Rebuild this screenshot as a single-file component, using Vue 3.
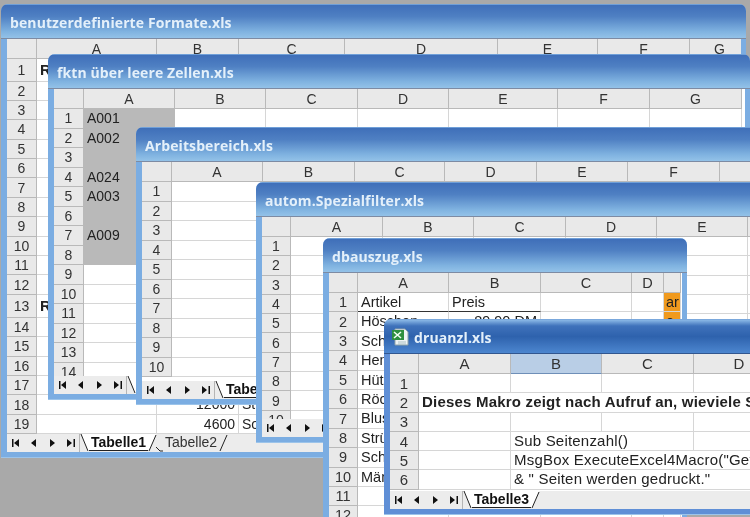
<script setup>
const uni = (n, h = 19.4) => Array(n).fill(h)

const windows = [
  {
    title: 'benutzerdefinierte Formate.xls', x: 1, y: 4, w: 745, h: 454,
    cols: [30, 120, 82, 106, 153, 100, 92, 60], labels: 'ABCDEFG',
    rows: [22.5, ...uni(11), 23, ...uni(6)],
    cells: { '1,1': { t: 'Rechnung', bold: true, big: true }, '13,1': { t: 'Rechnung', bold: true, big: true }, '18,2': { t: '12000', right: true }, '18,3': { t: 'Stück' }, '19,2': { t: '4600', right: true }, '19,3': { t: 'Sonst' } },
    tabs: [{ n: 'Tabelle1', on: true }, { n: 'Tabelle2' }]
  },
  {
    title: 'fktn über leere Zellen.xls', x: 48, y: 54, w: 702, h: 346,
    cols: [30, 91, 91, 92, 91, 109, 92, 92], labels: 'ABCDEFG',
    rows: uni(14, 19.5),
    cells: { '1,1': { t: 'A001', sel: true }, '2,1': { t: 'A002', sel: true }, '3,1': { t: '', sel: true }, '4,1': { t: 'A024', sel: true }, '5,1': { t: 'A003', sel: true }, '6,1': { t: '', sel: true }, '7,1': { t: 'A009', sel: true }, '8,1': { t: '', sel: true } },
    tabs: [{ n: 'Tabelle1', on: true }]
  },
  {
    title: 'Arbeitsbereich.xls', x: 136, y: 127, w: 700, h: 278,
    cols: [30, 91, 92, 90, 92, 91, 92, 91], labels: 'ABCDEFG',
    rows: uni(10, 19.5), cells: {},
    tabs: [{ n: 'Tabelle1', on: true }]
  },
  {
    title: 'autom.Spezialfilter.xls', x: 256, y: 182, w: 600, h: 261,
    cols: [29, 92, 91, 92, 91, 91, 91], labels: 'ABCDEF',
    rows: uni(10, 19.3), cells: {},
    tabs: [{ n: 'Tabelle1', on: true }]
  },
  {
    title: 'dbauszug.xls', x: 323, y: 238, w: 364, h: 360, wide: true,
    cols: [29, 91, 92, 91, 32, 17], labels: 'ABCD ',
    rows: uni(12),
    cells: {
      '1,1': { t: 'Artikel', under: true }, '1,2': { t: 'Preis', under: true }, '1,5': { t: 'ar', orange: true },
      '2,1': { t: 'Höschen' }, '2,2': { t: '89,90 DM', right: true }, '2,5': { t: 'e', orange: true },
      '3,1': { t: 'Schuhe' }, '4,1': { t: 'Hemden' }, '5,1': { t: 'Hüte' }, '6,1': { t: 'Röcke' },
      '7,1': { t: 'Blusen' }, '8,1': { t: 'Strümpfe' }, '9,1': { t: 'Schals' }, '10,1': { t: 'Mäntel' }
    },
    tabs: []
  },
  {
    title: 'druanzl.xls', x: 384, y: 319, w: 500, h: 196, active: true, wide: true,
    cols: [29, 92, 91, 92, 91, 91], labels: 'ABCDE', hot: 'B',
    rows: uni(6, 19.3),
    cells: {
      '2,1': { t: 'Dieses Makro zeigt nach Aufruf an, wieviele Seiten', bold: true, span: 5 },
      '4,2': { t: 'Sub Seitenzahl()', span: 2 },
      '5,2': { t: 'MsgBox ExecuteExcel4Macro("Get.Document(50)")', span: 4 },
      '6,2': { t: '& " Seiten werden gedruckt."', span: 4 }
    },
    tabs: [{ n: 'Tabelle3', on: true }]
  }
]

function rowCells(win, r) {
  const out = []
  for (let c = 1; c < win.cols.length; c++) {
    const cell = win.cells[`${r},${c}`] || { t: '' }
    out.push({ ...cell, c, span: cell.span || 1 })
    c += (cell.span || 1) - 1
  }
  return out
}

const placeWin = (w) => ({ left: w.x + 'px', top: w.y + 'px', width: w.w + 'px', height: w.h + 'px' })
const gridOf = (w) => ({
  gridTemplateColumns: w.cols.map((n) => n + 'px').join(' '),
  gridTemplateRows: ['20px', ...w.rows.map((n) => n + 'px')].join(' ')
})
</script>

<template>
  <div class="desk">
    <section v-for="win in windows" :key="win.title" class="win" :class="{ active: win.active, wide: win.wide }" :style="placeWin(win)">
      <header class="title">
        <svg v-if="win.active" class="xl" width="18" height="18" viewBox="0 0 18 18">
          <path d="M4 1h10l3 3v13H4z" fill="#eef3f4" stroke="#8fa3a8" />
          <rect x="1" y="2" width="12" height="10" fill="#2f8f3f" />
          <path d="M3 4l7 6M10 4l-7 6" stroke="#f4fff4" stroke-width="1.6" />
          <path d="M7 14h8M7 16h8" stroke="#a9c0c4" />
        </svg>
        <span>{{ win.title }}</span>
      </header>
      <div class="body">
        <div class="sheet">
          <div class="grid" :style="gridOf(win)">
            <div class="head corner"></div>
            <div v-for="l in win.labels.split('')" :key="l" class="head" :class="{ hot: win.hot === l }">{{ l === ' ' ? '' : l }}</div>
            <template v-for="(h, i) in win.rows" :key="i">
              <div class="head num">{{ i + 1 }}</div>
              <div
                v-for="cell in rowCells(win, i + 1)"
                :key="cell.c"
                class="cell"
                :class="{ bold: cell.bold, big: cell.big, right: cell.right, sel: cell.sel, under: cell.under, orange: cell.orange }"
                :style="cell.span > 1 ? { gridColumn: 'span ' + cell.span } : null"
              >{{ cell.t }}</div>
            </template>
          </div>
        </div>
        <div v-if="win.tabs.length" class="tabbar">
          <svg class="nav" width="73" height="18" viewBox="0 0 73 18">
            <path d="M5 5h1.5v8H5zM12 5v8l-5-4zM29 5v8l-5-4zM43 5v8l5-4zM60 5v8l5-4zM66.5 5H68v8h-1.5z" fill="#111" />
            <path d="M72.5 0v18" stroke="#b5b5b5" />
          </svg>
          <div v-for="tab in win.tabs" :key="tab.n" class="tab" :class="{ on: tab.on }">
            <svg width="9" height="18" viewBox="0 0 9 18">
              <path v-if="tab.on" d="M1 0L8 17H9V0z" fill="#fff" />
              <path :d="tab.on ? 'M1 0L8 17' : 'M2 13L6 17H9'" stroke="#222" fill="none" />
            </svg>
            <span>{{ tab.n }}</span>
            <svg width="9" height="18" viewBox="0 0 9 18">
              <path v-if="tab.on" d="M0 0V17H1L8 0z" fill="#fff" />
              <path d="M1 17L8 1" stroke="#222" fill="none" />
            </svg>
          </div>
        </div>
      </div>
    </section>
  </div>
</template>

<style scoped>
.desk {
  position: relative;
  width: 750px;
  height: 517px;
  overflow: hidden;
  background: #a9a9a9;
  font-family: "Liberation Sans", Arial, sans-serif;
  color: #222;
  filter: blur(0.35px);
}
.win {
  position: absolute;
  display: flex;
  flex-direction: column;
  box-sizing: border-box;
  background: #7badE2;
  border-radius: 7px 7px 0 0;
  overflow: hidden;
  box-shadow: inset 0 -1px 0 #9cc4ea;
}
.title {
  flex: 0 0 35px;
  box-sizing: border-box;
  display: flex;
  align-items: center;
  gap: 5px;
  padding: 1px 0 0 9px;
  background: linear-gradient(#3f6fb9 0, #4f80c3 35%, #7fb2e0 80%, #93c2e8 100%);
  border-top: 1px solid #6f9fd8;
  border-bottom: 1px solid #7d8ba3;
  color: #e4f0fa;
  font-family: "Open Sans", sans-serif;
  font-weight: 700;
  font-size: 14px;
  letter-spacing: 0.1px;
  white-space: nowrap;
}
.active .title {
  background: linear-gradient(#8ab8e6 0, #3f72bb 18%, #2e62ad 50%, #4c86cf 100%);
  padding-left: 7px;
  border-top-color: #7aa8dc;
  border-bottom-color: #31568f;
}
.active {
  background: #5f8fd6;
}
.body {
  flex: 1;
  min-height: 0;
  display: flex;
  flex-direction: column;
  padding: 0 5px 6px 6px;
}
.sheet {
  flex: 1;
  min-height: 0;
  overflow: hidden;
  background: #fff;
}
.grid {
  display: grid;
  font-size: 14px;
}
.wide .grid {
  font-size: 14.5px;
}
.active .grid {
  font-size: 15px;
}
.active .cell {
  letter-spacing: 0.2px;
}
.head {
  box-sizing: border-box;
  display: flex;
  align-items: center;
  justify-content: center;
  background: #e9e9e9;
  border-right: 1px solid #b9b9b9;
  border-bottom: 1px solid #b9b9b9;
  color: #333;
}
.head.hot {
  background: #b9cee6;
  border-bottom-color: #6f8fb8;
}
.cell {
  box-sizing: border-box;
  min-width: 0;
  padding: 0 3px;
  line-height: 18px;
  white-space: nowrap;
  background: #fff;
  border-right: 1px solid #d6d6d6;
  border-bottom: 1px solid #d6d6d6;
}
.cell.bold {
  font-weight: 700;
}
.cell.big {
  font-size: 15px;
  line-height: 21px;
}
.cell.right {
  text-align: right;
}
.cell.sel {
  background: #b9b9b9;
  border-color: #b9b9b9;
}
.cell.under {
  border-bottom: 1px solid #333;
}
.cell.orange {
  background: #f09a1e;
  padding: 0 2px;
}
.tabbar {
  flex: 0 0 18px;
  display: flex;
  background: #ececec;
  overflow: hidden;
}
.nav {
  flex: none;
}
.tab {
  display: flex;
  flex: none;
  height: 18px;
  font-size: 14px;
  line-height: 17px;
  color: #333;
}
.tab + .tab {
  margin-left: -3px;
}
.tab span {
  padding: 0 2px;
}
.tab.on span {
  background: #fff;
  height: 17px;
  font-weight: 700;
  color: #111;
  border-bottom: 1px solid #222;
  box-sizing: border-box;
}
.tab svg {
  display: block;
}
.xl {
  flex: none;
}
</style>
